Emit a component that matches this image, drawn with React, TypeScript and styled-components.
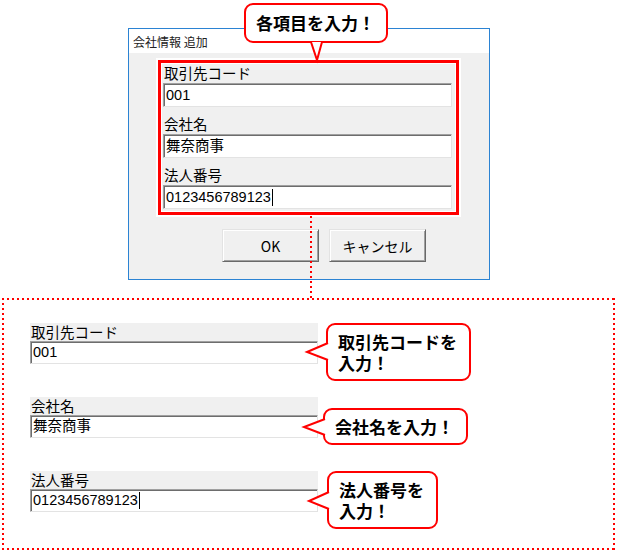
import styled, { createGlobalStyle } from "styled-components";

// Global reset so the page starts at 0,0 on white
const GlobalStyle = createGlobalStyle`
  html, body {
    margin: 0;
    padding: 0;
    background: #fff;
  }
  body {
    font-family: "Noto Sans CJK JP", sans-serif;
    color: #000;
  }
`;

const Page = styled.div`
  position: relative;
  width: 617px;
  height: 552px;
  overflow: hidden;
`;

// ---- upper part: the dialog ----
const TopArea = styled.div`
  position: relative;
  height: 298px;
  box-sizing: border-box;
  padding: 28px 0 0 128px;
`;

const Dialog = styled.div`
  width: 362px;
  height: 252px;
  box-sizing: border-box;
  border: 1px solid #2b83d3;
  background: #f0f0f0;
  display: flex;
  flex-direction: column;
`;

const TitleBar = styled.div`
  height: 24px;
  background: #fff;
  display: flex;
  align-items: center;
  padding-left: 4px;
  font-size: 12px;
  color: #222;
`;

const DialogBody = styled.div`
  flex: 1;
  padding: 7px 0 0 29px;
  display: flex;
  flex-direction: column;
`;

const Highlight = styled.div`
  width: 301px;
  height: 155px;
  box-sizing: border-box;
  border: 3px solid #ff0000;
  box-shadow: 0 0 0 2px #fff, inset 0 0 0 1px #fff;
  padding: 0 4px 3px 2px;
  display: flex;
  flex-direction: column;
  gap: 7px;
`;

const Field = styled.div<{ $width?: number }>`
  display: flex;
  flex-direction: column;
  width: ${(p) => (p.$width ? `${p.$width}px` : "auto")};
`;

const Label = styled.div<{ $band?: boolean }>`
  height: ${(p) => (p.$band ? "18px" : "20px")};
  line-height: ${(p) => (p.$band ? "17px" : "20px")};
  font-size: 14.5px;
  padding-left: 1px;
  background: ${(p) => (p.$band ? "#f0f0f0" : "transparent")};
  white-space: nowrap;
`;

const TextBox = styled.div<{ $height: number }>`
  height: ${(p) => p.$height}px;
  box-sizing: border-box;
  background: #fff;
  border: 1px solid;
  border-color: #a0a0a0 #e3e3e3 #e3e3e3 #a0a0a0;
  box-shadow: inset 1px 1px 0 #6d6d6d;
  padding-left: 2px;
  display: flex;
  align-items: center;
  font-family: "Liberation Sans", "Noto Sans CJK JP", sans-serif;
  font-size: 14.5px;
  line-height: 1;
  white-space: nowrap;
`;

const Caret = styled.span`
  display: inline-block;
  width: 1px;
  height: 17px;
  background: #000;
  margin-left: 1px;
`;

const ButtonRow = styled.div`
  display: flex;
  gap: 10px;
  margin-top: 14px;
  padding-left: 64px;
`;

const WinButton = styled.div`
  width: 97px;
  height: 33px;
  box-sizing: border-box;
  background: #f0f0f0;
  border: 1px solid;
  border-color: #e3e3e3 #696969 #696969 #e3e3e3;
  box-shadow: inset 1px 1px 0 #fff, inset -1px -1px 0 #a0a0a0;
  display: flex;
  align-items: center;
  justify-content: center;
  font-size: 14px;
  color: #000;
`;

// ---- callouts ----
const Callout = styled.div<{ $mt?: number; $ml?: number }>`
  position: relative;
  flex: none;
  background: #fff;
  border: 2px solid #ff0000;
  border-radius: 9px;
  padding: 6px 12px 6px 10px;
  margin-top: ${(p) => p.$mt ?? 0}px;
  margin-left: ${(p) => p.$ml ?? 0}px;
  font-size: 17px;
  font-weight: 700;
  line-height: 21px;
  white-space: nowrap;
`;

const TopCallout = styled(Callout)`
  position: absolute;
  left: 244px;
  top: 3px;
  margin: 0;
  padding: 7px 11px 8px 10px;
`;

const Tail = styled.svg`
  position: absolute;
  left: -2px;
  top: -2px;
  width: 1px;
  height: 1px;
  overflow: visible;
`;

const BubbleTail = ({ points }: { points: string }) => (
  <Tail>
    <polyline points={points} fill="#fff" stroke="#ff0000" strokeWidth={2} strokeLinejoin="miter" />
  </Tail>
);

const Connector = styled.div`
  position: absolute;
  left: 310px;
  top: 216px;
  width: 2px;
  height: 82px;
  background: repeating-linear-gradient(180deg, #ff0000 0 2px, transparent 2px 5px);
`;

// ---- lower part: enlarged fields ----
const dots = (dir: string) =>
  `repeating-linear-gradient(${dir}, #ff0000 0 2px, transparent 2px 5px)`;

const DetailFrame = styled.div`
  width: 613px;
  height: 252px;
  margin-left: 2px;
  box-sizing: border-box;
  padding: 25px 0 0 28px;
  background:
    ${dots("90deg")} left top / 100% 2px no-repeat,
    ${dots("90deg")} left bottom / 100% 2px no-repeat,
    ${dots("180deg")} left top / 2px 100% no-repeat,
    ${dots("180deg")} right top / 2px 100% no-repeat;
  display: flex;
  flex-direction: column;
  gap: 33px;
`;

const DetailRow = styled.div`
  display: flex;
  align-items: flex-start;
  height: 41px;
`;

const fields = [
  { label: "取引先コード", value: "001" },
  { label: "会社名", value: "舞奈商事" },
  { label: "法人番号", value: "0123456789123", caret: true },
];

const callouts = [
  { lines: ["取引先コードを", "入力！"], mt: 0, ml: 8, tail: "2,20 -19,29 2,37" },
  { lines: ["会社名を入力！"], mt: 11, ml: 5, tail: "2,11 -19,19 2,27" },
  { lines: ["法人番号を", "入力！"], mt: 0, ml: 9, tail: "2,21 -18,30 2,38" },
];

const App = () => {
  return (
    <Page>
      <GlobalStyle />
      <TopArea>
        <Dialog>
          <TitleBar>会社情報 追加</TitleBar>
          <DialogBody>
            <Highlight>
              {fields.map((f) => (
                <Field key={f.label}>
                  <Label>{f.label}</Label>
                  <TextBox $height={24}>
                    {f.value}
                    {f.caret && <Caret />}
                  </TextBox>
                </Field>
              ))}
            </Highlight>
            <ButtonRow>
              <WinButton>OK</WinButton>
              <WinButton>キャンセル</WinButton>
            </ButtonRow>
          </DialogBody>
        </Dialog>
        <TopCallout>
          各項目を入力！
          <BubbleTail points="67,39 73,57 78,39" />
        </TopCallout>
      </TopArea>
      <Connector />
      <DetailFrame>
        {fields.map((f, i) => (
          <DetailRow key={f.label}>
            <Field $width={288}>
              <Label $band>{f.label}</Label>
              <TextBox $height={23}>
                {f.value}
                {f.caret && <Caret />}
              </TextBox>
            </Field>
            <Callout $mt={callouts[i].mt} $ml={callouts[i].ml}>
              {callouts[i].lines.map((line, j) => (
                <div key={j}>{line}</div>
              ))}
              <BubbleTail points={callouts[i].tail} />
            </Callout>
          </DetailRow>
        ))}
      </DetailFrame>
    </Page>
  );
};

export default App;
